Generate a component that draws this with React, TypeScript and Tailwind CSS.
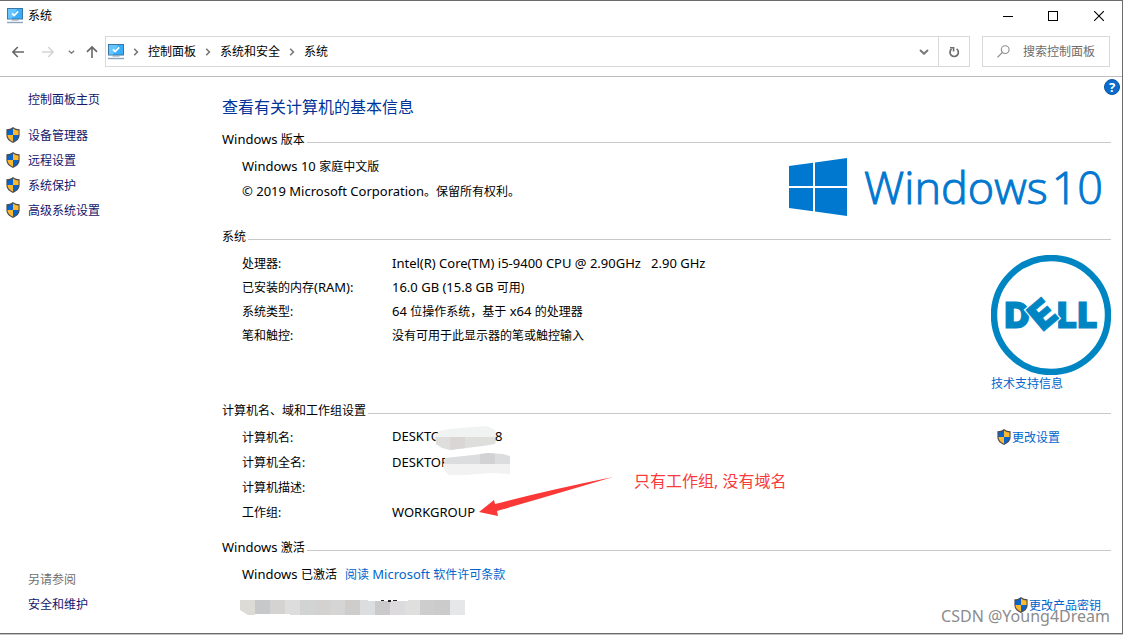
import type { ReactNode } from "react";

const Shield = () => (
  <svg viewBox="0 0 14 16" className="mb-px h-4 w-3.5 shrink-0" aria-hidden="true">
    <path d="M7 0 C5 1.6 3 2.2 0.4 2.3 V8 C0.4 12 3.2 14.4 7 15.9 C10.8 14.4 13.6 12 13.6 8 V2.3 C11 2.2 9 1.6 7 0Z" fill="#4d4d4d" />
    <path d="M7 1.4 C5.2 2.7 3.6 3.2 1.5 3.4 V8 H7Z" fill="#0a63c9" />
    <path d="M7 1.4 C8.8 2.7 10.4 3.2 12.5 3.4 V8 H7Z" fill="#fdb92e" />
    <path d="M1.5 8 C1.6 11.3 3.8 13.4 7 14.7 V8Z" fill="#fdb92e" />
    <path d="M12.5 8 C12.4 11.3 10.2 13.4 7 14.7 V8Z" fill="#0a63c9" />
  </svg>
);

const Monitor = () => (
  <svg viewBox="0 0 16 16" className="h-4 w-4 shrink-0" aria-hidden="true">
    <rect x="0.5" y="0.5" width="15" height="10.5" fill="#38aefb" stroke="#3b78a3" />
    <path d="M1 1 H10 L5 10.5 H1Z" fill="#66c4ff" />
    <path d="M5 5.4 L7.2 7.6 L11.2 3.4" fill="none" stroke="#fff" strokeWidth="1.7" />
    <path d="M4.5 12 H11.5" stroke="#8796a6" strokeWidth="1" />
    <path d="M0 14.5 H16" stroke="#8da3bb" strokeWidth="1.4" />
  </svg>
);

/* Latin runs are set one pixel larger than the Chinese text beside them. */
const Latin = ({ children }: { children: ReactNode }) => <span className="text-[13px] leading-none">{children}</span>;

const Crumb = ({ children }: { children: ReactNode }) => (
  <>
    <svg viewBox="0 0 6 8" className="h-2 w-1.5 shrink-0" aria-hidden="true">
      <path d="M1.2 0.8 L4.4 4 L1.2 7.2" fill="none" stroke="#777" strokeWidth="1.6" />
    </svg>
    <button type="button" className="whitespace-nowrap">{children}</button>
  </>
);

const ChevronDown = ({ className }: { className: string }) => (
  <svg viewBox="0 0 10 6" className={className} aria-hidden="true">
    <path d="M1 1 L5 4.8 L9 1" fill="none" stroke="#777" strokeWidth="1.9" />
  </svg>
);

const Heading = ({ children }: { children: ReactNode }) => (
  <div className="flex h-5 items-center gap-0.5">
    <h2 className="pt-0.5 whitespace-nowrap">{children}</h2>
    <div className="mt-1.5 h-px flex-1 bg-[#c8c8c8]" />
  </div>
);

const Row = ({ label, children, tall }: { label: ReactNode; children?: ReactNode; tall?: boolean }) => (
  <div className={tall ? "flex h-[25px] items-center" : "flex h-6 items-center"}>
    <dt className="w-[150px] shrink-0">{label}</dt>
    <dd className="whitespace-pre">{children}</dd>
  </div>
);

const TASKS = ["设备管理器", "远程设置", "系统保护", "高级系统设置"];

const CELLS = [
  "#dcdbd6", "#c6c8ca", "#d4d3d2", "#dedddd", "#d2d4d3", "#d3d2d1", "#d5d5d5", "#cfcdcc",
  "#dcdddf", "#cbcaca", "#dcdadc", "#dfdfde", "#cdcdcd", "#cbcbcb", "#e6e7e9",
];

const TitleBar = () => (
  <header className="flex h-[30px] items-center pl-[7px]">
    <Monitor />
    <span className="ml-[5px] flex-1">系统</span>
    <button type="button" aria-label="最小化" className="flex w-[45px] justify-center">
      <svg viewBox="0 0 10 10" className="h-2.5 w-2.5"><path d="M0 5.5 H10" stroke="#000" /></svg>
    </button>
    <button type="button" aria-label="最大化" className="flex w-[45px] justify-center">
      <svg viewBox="0 0 10 10" className="h-2.5 w-2.5"><rect x="0.5" y="0.5" width="9" height="9" fill="none" stroke="#000" /></svg>
    </button>
    <button type="button" aria-label="关闭" className="flex w-[47px] justify-center">
      <svg viewBox="0 0 10 10" className="h-2.5 w-2.5"><path d="M0 0 L10 10 M10 0 L0 10" stroke="#000" strokeWidth="1.1" /></svg>
    </button>
  </header>
);

const Toolbar = () => (
  <nav className="flex items-center border-b border-[#bdbdbd] pt-[5px] pr-3 pb-[9px] pl-3" aria-label="导航">
    <button type="button" aria-label="后退">
      <svg viewBox="0 0 12 12" className="h-3 w-3"><path d="M12 6 H1 M5.8 1 L0.9 6 L5.8 11" fill="none" stroke="#666" strokeWidth="1.6" /></svg>
    </button>
    <button type="button" aria-label="前进" className="ml-[18px]">
      <svg viewBox="0 0 12 12" className="h-3 w-3"><path d="M0 6 H11 M6.2 1 L11.1 6 L6.2 11" fill="none" stroke="#d5d5d5" strokeWidth="1.6" /></svg>
    </button>
    <button type="button" aria-label="最近的位置" className="ml-3.5">
      <ChevronDown className="h-1 w-[7px]" />
    </button>
    <button type="button" aria-label="向上" className="ml-[11px]">
      <svg viewBox="0 0 12 12" className="h-3 w-3"><path d="M6 12 V1 M1 5.9 L6 0.9 L11 5.9" fill="none" stroke="#666" strokeWidth="1.6" /></svg>
    </button>
    <div className="ml-[7px] flex h-[31px] flex-1 items-stretch border border-[#d9d9d9]">
      <div className="flex flex-1 items-center gap-[9px] pl-0.5">
        <Monitor />
        <Crumb>控制面板</Crumb>
        <Crumb>系统和安全</Crumb>
        <Crumb>系统</Crumb>
      </div>
      <button type="button" aria-label="展开" className="flex w-7 items-center justify-center">
        <ChevronDown className="h-1.5 w-2.5" />
      </button>
      <button type="button" aria-label="刷新" className="flex w-[31px] items-center justify-center border-l border-[#d9d9d9]">
        <svg viewBox="0 0 12 12" className="h-3 w-3">
          <path d="M8.6 2.9 A4.2 4.2 0 1 1 3.6 3" fill="none" stroke="#6e6e6e" strokeWidth="1.7" />
          <path d="M2 1.8 H5.6 V5.6" fill="none" stroke="#6e6e6e" strokeWidth="1.6" />
        </svg>
      </button>
    </div>
    <label className="ml-3 flex h-[31px] w-32 items-center border border-[#d9d9d9] pl-3.5">
      <svg viewBox="0 0 13 13" className="h-[13px] w-[13px] shrink-0" role="img" aria-label="搜索">
        <circle cx="8.2" cy="4.6" r="3.9" fill="none" stroke="#8c8c8c" strokeWidth="1.1" />
        <path d="M5.4 7.4 L0.5 12.4" stroke="#8c8c8c" strokeWidth="1.3" />
      </svg>
      <input type="text" placeholder="搜索控制面板" className="ml-[13px] w-full min-w-0 placeholder:text-[#6d6d6d] outline-none" />
    </label>
  </nav>
);

const Sidebar = () => (
  <aside className="flex w-[222px] shrink-0 flex-col pt-2.5 pb-4 text-[#15156b]">
    <a href="#home" className="flex h-[25px] items-center pl-7">控制面板主页</a>
    <ul className="mt-[11px]">
      {TASKS.map((t) => (
        <li key={t}>
          <a href="#task" className="flex h-[25px] items-center gap-2 pl-1.5">
            <Shield />
            {t}
          </a>
        </li>
      ))}
    </ul>
    <div className="mt-auto pl-7">
      <p className="flex h-[25px] items-center text-[#707070]">另请参阅</p>
      <a href="#security" className="flex h-[25px] items-center">安全和维护</a>
    </div>
  </aside>
);

const WindowsLogo = () => (
  <div className="mt-1 mr-2 flex h-[58px] items-center text-[#0078d0]">
    <svg viewBox="0 0 58 58" className="h-[58px] w-[58px]" fill="currentColor" aria-hidden="true">
      <path d="M0 8 L24 4.8 V28 H0Z M26 4.4 L58 0 V28 H26Z M0 30 H24 V53.2 L0 50Z M26 30 H58 V58 L26 53.6Z" />
    </svg>
    <span className="ml-[17px] flex gap-1 font-['Open_Sans'] text-[45px] leading-[58px] font-light [-webkit-text-stroke:1px_#0078d0]">
      <span>Windows</span>
      <span>10</span>
    </span>
  </div>
);

const DellLogo = () => (
  <svg viewBox="0 0 120 120" className="h-[120px] w-[120px]" role="img" aria-label="DELL">
    <circle cx="60" cy="60" r="57" fill="none" stroke="#0085c3" strokeWidth="6.4" />
    <g fill="#0085c3" stroke="#0085c3" strokeWidth="1.2" fontFamily="Inter" fontWeight="900" fontSize="35">
      <text x="13.5" y="72.5">D</text>
      <text x="66" y="72.5">L</text>
      <text x="86.5" y="72.5">L</text>
      <g transform="translate(51.5 59.5) rotate(-40)" fontSize="38">
        <text x="0" y="13.5" textAnchor="middle" stroke="#fff" strokeWidth="3.2">E</text>
        <text x="0" y="13.5" textAnchor="middle" strokeWidth="0.8">E</text>
      </g>
    </g>
  </svg>
);

export default function App() {
  return (
    <div className="flex min-h-screen flex-col bg-[#c4c4c4] pb-px font-['Noto_Sans','Noto_Sans_CJK_SC',sans-serif] text-[12px] leading-4 text-black">
      <div className="relative flex flex-1 flex-col border-t border-r border-b border-[#6b6b6b] bg-white">
        <TitleBar />
        <Toolbar />
        <div className="relative flex flex-1">
          <button type="button" aria-label="帮助" className="absolute top-0.5 right-0.5 flex h-4 w-4 items-center justify-center rounded-full border border-[#0a55a5] bg-[#0b6bcb] text-[13px] font-bold text-white">
            ?
          </button>
          <Sidebar />
          <main className="min-w-0 flex-1 pt-[18px] pr-[11px]">
            <h1 className="text-[16px] leading-6 text-[#003399]">查看有关计算机的基本信息</h1>

            <section className="mt-2.5">
              <Heading><Latin>Windows</Latin> 版本</Heading>
              <div className="mt-[5px] flex items-start justify-between pl-5">
                <div>
                  <p className="h-[25px] leading-[25px]"><Latin>Windows 10 </Latin>家庭中文版</p>
                  <p className="h-[25px] leading-[25px]"><Latin>© 2019 Microsoft Corporation</Latin>。保留所有权利。</p>
                </div>
                <WindowsLogo />
              </div>
            </section>

            <section className="mt-2.5">
              <Heading>系统</Heading>
              <div className="mt-[5px] flex justify-between pl-5">
                <dl className="pt-px">
                  <Row label="处理器:"><Latin>{"Intel(R) Core(TM) i5-9400 CPU @ 2.90GHz   2.90 GHz"}</Latin></Row>
                  <Row label={<>已安装的内存<Latin>(RAM):</Latin></>}><Latin>16.0 GB (15.8 GB </Latin>可用)</Row>
                  <Row label="系统类型:"><Latin>64 </Latin>位操作系统，基于<Latin> x64 </Latin>的处理器</Row>
                  <Row label="笔和触控:">没有可用于此显示器的笔或触控输入</Row>
                </dl>
                <div className="flex flex-col pt-1">
                  <DellLogo />
                  <a href="#support" className="h-[15px] leading-[17px] text-[#0066cc]">技术支持信息</a>
                </div>
              </div>
            </section>

            <section className="mt-2.5">
              <Heading>计算机名、域和工作组设置</Heading>
              <div className="relative mt-[5px] flex items-start justify-between pl-5">
                <dl>
                  <Row tall label="计算机名:">
                    <Latin>DESKTO</Latin>
                    <svg viewBox="0 0 62 24" className="-my-1 -ml-1.5 inline-block h-6 w-[62px]" aria-hidden="true">
                      <path d="M0 11 L4 5 L14 3 L38 1 L52 0 L60 4 L62 11Z" fill="#f1f2f2" />
                      <path d="M0 11 H62 L60 18 L48 20 L15 24 L7 22 L1 18Z" fill="#dededd" />
                      <path d="M15 11 H30 V22 L15 24Z" fill="#d9d6d5" />
                    </svg>
                    <span className="-ml-0.5 text-[13px] leading-none">8</span>
                  </Row>
                  <Row tall label="计算机全名:">
                    <Latin>DESKTOP</Latin>
                    <svg viewBox="0 0 67 24" className="-mt-1 -mb-1.5 -ml-1.5 inline-block h-6 w-[67px]" aria-hidden="true">
                      <path d="M1 11 L2 6 L30 3 L46 1 L60 2 L67 4 V12 H1Z" fill="#dcddde" />
                      <path d="M37 2 L46 1 L52 2 V12 H37Z" fill="#d2d2d4" />
                      <path d="M0 12 H67 V22 L50 21 L22 23 L6 23 L1 18Z" fill="#f2f2f2" />
                    </svg>
                  </Row>
                  <Row tall label="计算机描述:" />
                  <Row tall label="工作组:"><Latin>WORKGROUP</Latin></Row>
                </dl>
                <a href="#settings" className="mr-[51px] flex h-[25px] items-center gap-px text-[#0066cc]">
                  <Shield />
                  更改设置
                </a>
                <svg viewBox="0 0 134 40" className="absolute top-[51px] left-[257px] h-10 w-[134px]" aria-hidden="true">
                  <path d="M0 36 L15 24 L16 28 Q70 14 134 1 Q70 20 18 35 L19 40Z" fill="#fb3838" />
                </svg>
                <p className="absolute top-11 left-[412px] text-[16px] leading-6 whitespace-nowrap text-[#f93b3b]">只有工作组, 没有域名</p>
              </div>
            </section>

            <section className="mt-3">
              <Heading><Latin>Windows</Latin> 激活</Heading>
              <div className="mt-[5px] pl-5">
                <p className="flex h-[25px] items-center gap-2">
                  <span><Latin>Windows </Latin>已激活</span>
                  <a href="#license" className="text-[#0066cc]">阅读<Latin> Microsoft </Latin>软件许可条款</a>
                </p>
                <div className="mt-[7px] flex h-[25px] items-start justify-between">
                  <svg viewBox="0 0 225 15" className="mt-1.5 -ml-0.5 h-[15px] w-[225px]" aria-hidden="true">
                    {CELLS.map((c, i) => (
                      <rect key={c} x={i * 15} width="15" height="15" fill={c} />
                    ))}
                    <path d="M0 10 L8 15 H0Z M15 14 H50 V15 H15Z M128 0 H168 V1 H128Z" fill="#fff" />
                    <path d="M141 0 H144 V1 H141Z M148 0 H151 V2 H148Z M153 0 H157 V1 H153Z" fill="#222" />
                  </svg>
                  <a href="#key" className="mt-[3px] mr-2.5 flex items-center gap-px text-[#0066cc]">
                    <Shield />
                    更改产品密钥
                  </a>
                </div>
              </div>
            </section>
          </main>
          <span className="absolute right-3 bottom-[5px] text-[16px] leading-6 text-[#8c8c8c]">CSDN @Young4Dream</span>
        </div>
      </div>
    </div>
  );
}
